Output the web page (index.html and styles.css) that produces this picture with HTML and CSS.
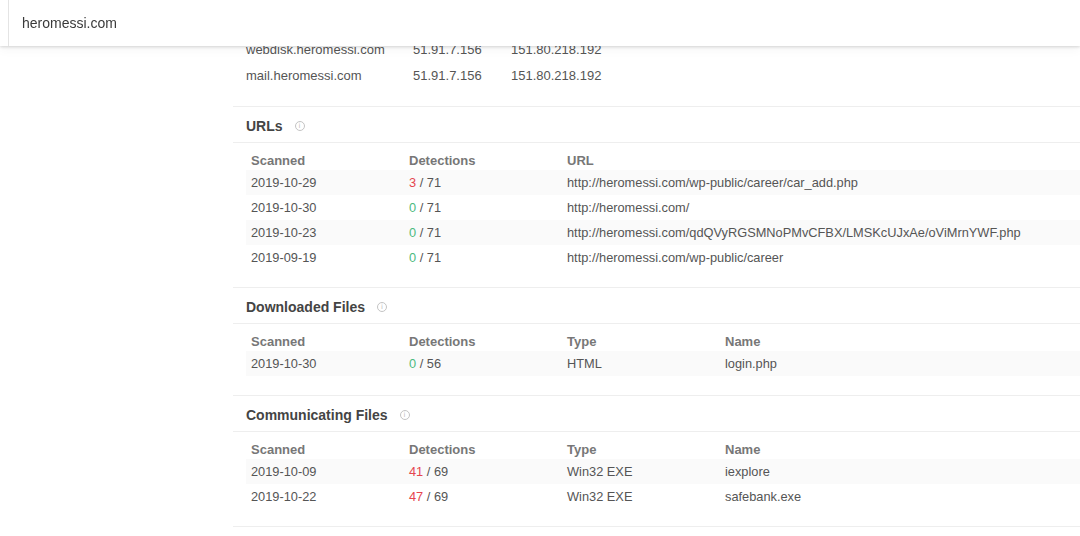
FILE: index.html
```html
<!DOCTYPE html>
<html lang="en">
<head>
<meta charset="utf-8">
<title>heromessi.com</title>
<link rel="stylesheet" href="styles.css">
</head>
<body>
<header class="topbar">
  <div class="search">heromessi.com</div>
</header>
<main class="content">
  <section class="hosts">
    <div class="host-row"><span>webdisk.heromessi.com</span><span>51.91.7.156</span><span>151.80.218.192</span></div>
    <div class="host-row"><span>mail.heromessi.com</span><span>51.91.7.156</span><span>151.80.218.192</span></div>
  </section>

  <section class="block">
    <div class="block-head"><h2>URLs</h2><span class="info">i</span></div>
    <div class="table-wrap">
      <table class="data">
        <colgroup><col class="c1"><col class="c2"><col></colgroup>
        <thead><tr><th>Scanned</th><th>Detections</th><th>URL</th></tr></thead>
        <tbody>
          <tr><td>2019-10-29</td><td><span class="bad">3</span> / 71</td><td>http://heromessi.com/wp-public/career/car_add.php</td></tr>
          <tr><td>2019-10-30</td><td><span class="good">0</span> / 71</td><td>http://heromessi.com/</td></tr>
          <tr><td>2019-10-23</td><td><span class="good">0</span> / 71</td><td>http://heromessi.com/qdQVyRGSMNoPMvCFBX/LMSKcUJxAe/oViMrnYWF.php</td></tr>
          <tr><td>2019-09-19</td><td><span class="good">0</span> / 71</td><td>http://heromessi.com/wp-public/career</td></tr>
        </tbody>
      </table>
    </div>
  </section>

  <section class="block">
    <div class="block-head"><h2>Downloaded Files</h2><span class="info">i</span></div>
    <div class="table-wrap table-wrap-lg">
      <table class="data">
        <colgroup><col class="c1"><col class="c2"><col class="c3"><col></colgroup>
        <thead><tr><th>Scanned</th><th>Detections</th><th>Type</th><th>Name</th></tr></thead>
        <tbody>
          <tr><td>2019-10-30</td><td><span class="good">0</span> / 56</td><td>HTML</td><td>login.php</td></tr>
        </tbody>
      </table>
    </div>
  </section>

  <section class="block">
    <div class="block-head"><h2>Communicating Files</h2><span class="info">i</span></div>
    <div class="table-wrap">
      <table class="data">
        <colgroup><col class="c1"><col class="c2"><col class="c3"><col></colgroup>
        <thead><tr><th>Scanned</th><th>Detections</th><th>Type</th><th>Name</th></tr></thead>
        <tbody>
          <tr><td>2019-10-09</td><td><span class="bad">41</span> / 69</td><td>Win32 EXE</td><td>iexplore</td></tr>
          <tr><td>2019-10-22</td><td><span class="bad">47</span> / 69</td><td>Win32 EXE</td><td>safebank.exe</td></tr>
        </tbody>
      </table>
    </div>
  </section>
</main>
</body>
</html>
```

FILE: styles.css
```css
* { box-sizing: border-box; }
html, body { margin: 0; padding: 0; background: #fff; }
body {
  font-family: "Liberation Sans", Arial, Helvetica, sans-serif;
  font-size: 13px;
  color: #555;
}
.topbar {
  position: fixed;
  top: 0;
  left: 0;
  right: 0;
  height: 46px;
  background: #fff;
  box-shadow: 0 1px 3px rgba(0,0,0,0.16), 0 4px 10px rgba(0,0,0,0.04);
  z-index: 10;
}
.search {
  margin-left: 8px;
  height: 100%;
  border-left: 1px solid #e4e4e4;
  padding-left: 13px;
  display: flex;
  align-items: center;
  font-size: 14px;
  color: #3a3a3a;
  padding-bottom: 1px;
}
.content {
  margin-left: 233px;
}
.hosts {
  padding: 36px 0 18px 13px;
  border-bottom: 1px solid #eeeeee;
}
.host-row {
  display: grid;
  grid-template-columns: 167px 98px 1fr;
  height: 26px;
  align-items: center;
}
.block {
  border-bottom: 1px solid #eeeeee;
}
.block-head {
  height: 36px;
  padding: 3px 0 0 13px;
  border-bottom: 1px solid #eeeeee;
  display: flex;
  align-items: center;
}
.block-head h2 {
  margin: 0;
  font-size: 14px;
  font-weight: bold;
  color: #444;
}
.info {
  margin-left: 12px;
  width: 10px;
  height: 10px;
  border: 1px solid #c4c4c4;
  border-radius: 50%;
  color: #bbb;
  font-size: 7px;
  line-height: 8px;
  text-align: center;
  font-family: "DejaVu Sans", sans-serif;
}
.table-wrap {
  padding: 9px 0 17px 13px;
}
.table-wrap-lg {
  padding-bottom: 19px;
}
.data {
  width: 100%;
  border-collapse: collapse;
  border-spacing: 0;
  table-layout: fixed;
}
.data col.c1, .data col.c2, .data col.c3 { width: 158px; }
.data th {
  height: 18px;
  padding: 0 0 0 5px;
  text-align: left;
  font-weight: bold;
  color: #777;
  white-space: nowrap;
  line-height: 18px;
}
.data td {
  height: 25px;
  padding: 0 0 0 5px;
  white-space: nowrap;
  color: #555;
  font-size: 12.8px;
  line-height: 25px;
}
.data tbody tr:nth-child(odd) td { background: #fafafa; }
.bad { color: #e5464f; }
.good { color: #4dba80; }
```
